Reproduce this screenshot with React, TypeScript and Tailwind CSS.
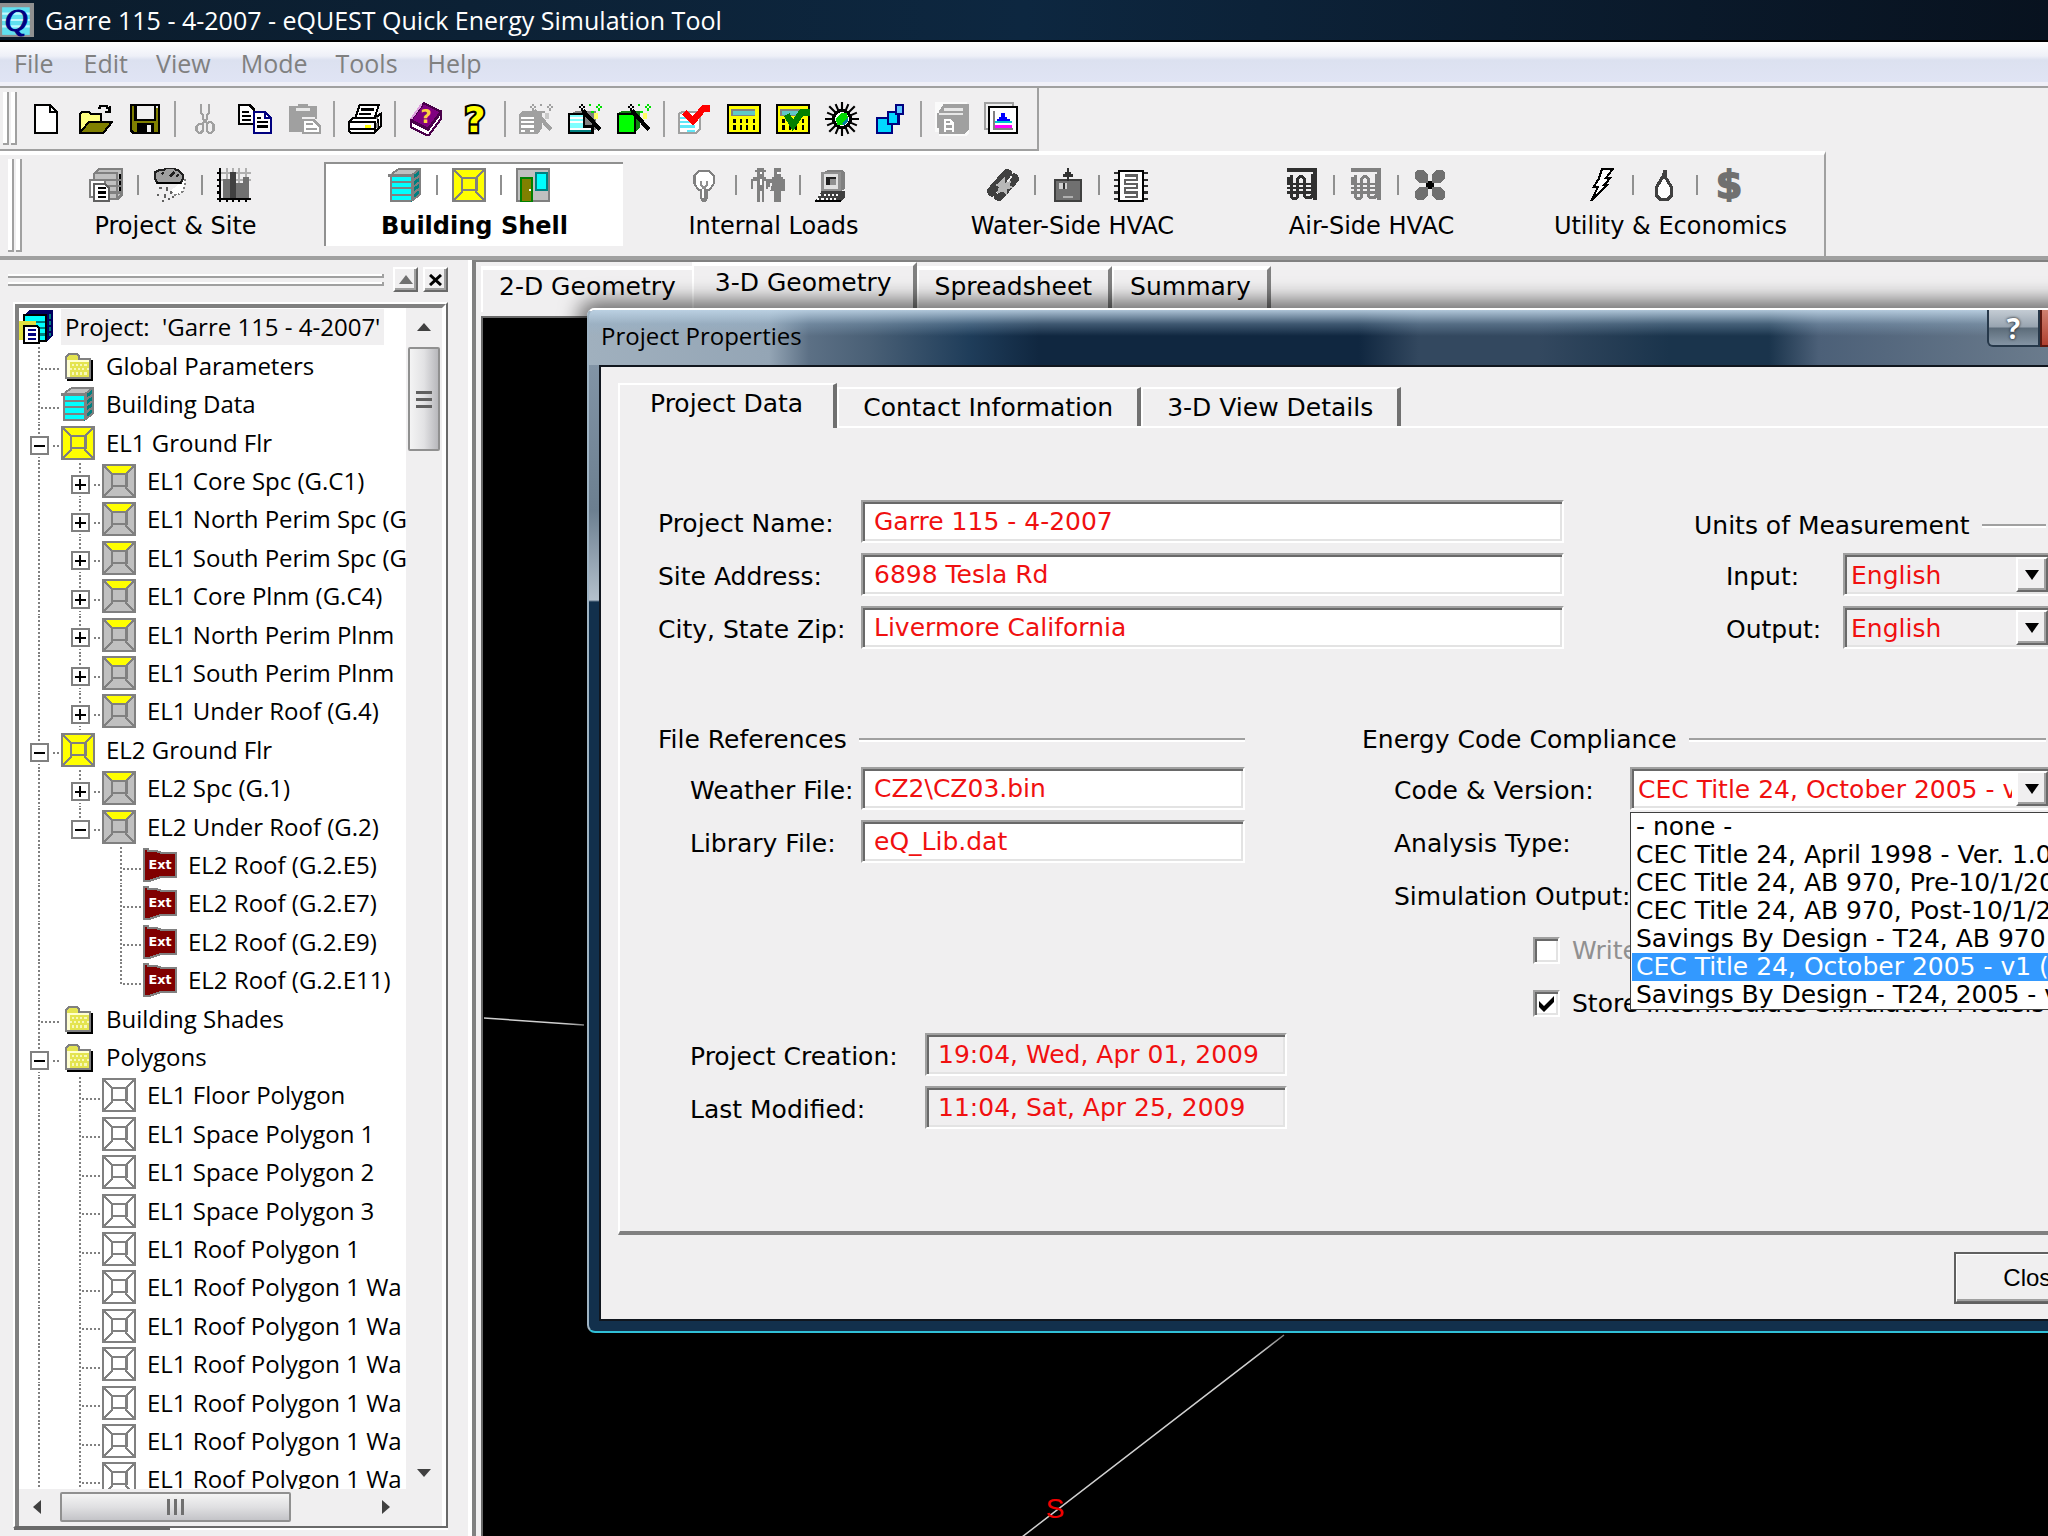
import React, { ReactNode, useState } from "react";

const svgProps = {
  viewBox: "0 0 16 16",
  width: 34,
  height: 34,
  shapeRendering: "crispEdges" as const,
  fill: "none",
  "aria-hidden": true,
};

const Icon = ({ children }: { children: ReactNode }) => (
  <svg {...svgProps} className="shrink-0">
    {children}
  </svg>
);

/* ---------- toolbar icons ---------- */

const NewIcon = () => (
  <Icon>
    <path d="M2.5 1.5h7l3 3v10h-10z" fill="#fff" stroke="#000" />
    <path d="M9.5 1.5v3h3" stroke="#000" />
  </Icon>
);

const OpenIcon = () => (
  <Icon>
    <path d="M.5 14V5.500l1-1h3l1 1h5v4" fill="#ffff80" stroke="#000" />
    <path d="M.5 14.500l4-5h11l-4 5z" fill="#808000" stroke="#000" />
    <path d="M9 3h1V2h3v1h1v2M12 4.500h3M14.500 2v3" stroke="#000" />
  </Icon>
);

const SaveIcon = () => (
  <Icon>
    <path d="M1.500 1.500h13v13h-12l-1-1z" fill="#808000" stroke="#000" />
    <path d="M4 2h8v6H4z" fill="#f0f0f0" />
    <path d="M3.500 1.500v7h9v-7" stroke="#000" />
    <path d="M4 10h8v5H4z" fill="#000" />
    <path d="M9 11h2v3H9zM13 2h1v1h-1z" fill="#f0f0f0" />
  </Icon>
);

const CutIcon = () => (
  <Icon>
    <path d="M5.500 1v4l1 1v2l2 2M9.500 1v4l-1 1v2l-2 2" stroke="#a0a0a0" />
    <path d="M4.500 10.500h2v3l-1 1h-1l-1-1v-2zM9.500 9.500h1l1 1v3l-1 1h-1l-1-1v-3z" stroke="#a0a0a0" />
  </Icon>
);

const CopyIcon = () => (
  <Icon>
    <path d="M.5 1.500h5l2 2v7h-7z" fill="#fff" stroke="#000" />
    <path d="M2 4.500h3M2 6.500h4M2 8.500h4" stroke="#000" />
    <path d="M7.500 4.500h5l3 3v7h-8z" fill="#fff" stroke="#000080" />
    <path d="M12.500 4.500v3h3" stroke="#000080" />
    <path d="M9 7.500h2M9 9.500h5M9 11.500h5" stroke="#000" />
  </Icon>
);

const PasteIcon = () => (
  <Icon>
    <path d="M1 2h4V1h5v1h4v6h-1V7H7v7H1z" fill="#a0a0a0" />
    <path d="M4 3h7v1H4z" fill="#e8e8e8" />
    <path d="M7.500 8.500h5l3 3v3h-8z" fill="#fff" stroke="#a0a0a0" />
    <path d="M9 10.500h3M9 12.500h5" stroke="#a0a0a0" />
  </Icon>
);

const PrintIcon = () => (
  <Icon>
    <path d="M5.500 1.500h9l-2 6h-9z" fill="#fff" stroke="#000" />
    <path d="M6 3.500h6M5 5.500h6" stroke="#000" />
    <path d="M.5 9.500l2-2h10l3-2v6l-3 3h-11l-1-1z" fill="#fff" stroke="#000" />
    <path d="M1 9.500h11.500v5M1 12.500h11M14 8v4" stroke="#000" />
    <path d="M8 11h3v1H8z" fill="#ff0" />
    <path d="M13 7h1v1h-1zM13 10h1v2h-1z" fill="#808080" />
  </Icon>
);

const BookIcon = () => (
  <Icon>
    <path d="M1 9l8 4 6-8v3l-6 8-8-4z" fill="#fff" stroke="#4a004a" />
    <path d="M7 .5l8 4-6 8-8-4z" fill="#800080" stroke="#4a004a" />
    <path d="M1 8l5-7" stroke="#e0a0e0" />
    <text x="8" y="10" textAnchor="middle" fontSize="9" fontWeight="700" fontFamily="DejaVu Sans" fill="#ffd040">
      ?
    </text>
  </Icon>
);

const HelpIcon = () => (
  <Icon>
    <text
      x="8"
      y="14"
      textAnchor="middle"
      fontSize="17"
      fontWeight="700"
      fontFamily="DejaVu Sans"
      fill="#ff0"
      stroke="#000"
      strokeWidth="2"
      paintOrder="stroke"
    >
      ?
    </text>
  </Icon>
);

const Wand = ({ color, spark, star }: { color: string; spark: string; star: string }) => (
  <>
    <path d="M7 4l8 9" stroke={color} strokeWidth="2" />
    <path d="M6 1h1v1H6zM5 2h1v1H5zM7 2h1v1H7zM6 3h1v1H6z" fill={color} />
    <path d="M10 1h1v1h-1zM14 1h1v1h-1zM13 2h1v1h-1zM15 2h1v1h-1zM14 3h1v1h-1zM11 4h1v1h-1z" fill={spark} />
    <path d="M12 5h2v3h-2z" fill={star} />
  </>
);

const GrayWizardIcon = () => (
  <Icon>
    <path d="M0 6l2-2h9v8l-2 3H0z" fill="#a0a0a0" />
    <path d="M1 7.500h6M1 9.500h6M1 11.500h6M1 13.500h2M5 13.500h2" stroke="#fff" />
    <Wand color="#a0a0a0" spark="#a0a0a0" star="#c8c8c8" />
  </Icon>
);

const CyanWizardIcon = () => (
  <Icon>
    <path d="M2 5l2-1h9v9l-3 2z" fill="#808080" />
    <path d="M.5 5.500h7v6h4v3H.5z" fill="#80ffff" stroke="#000" />
    <path d="M1 7.500h6M1 9.500h6M1 12.500h10" stroke="#fff" />
    <path d="M1 13.500h10" stroke="#008080" />
    <Wand color="#000" spark="#00e000" star="#ffff60" />
  </Icon>
);

const GreenWizardIcon = () => (
  <Icon>
    <path d="M1 5l2-1h8v8l-2 2z" fill="#108010" />
    <path d="M.5 5.500h8v9h-8z" fill="#00ff00" stroke="#000" />
    <Wand color="#000" spark="#00e000" star="#ffff60" />
  </Icon>
);

const RedCheckIcon = () => (
  <Icon>
    <path d="M.5 5.500l2-1h8v8l-2 2h-8z" fill="#fff" stroke="#a0a0a0" />
    <path d="M1 7.500h7M1 9.500h7M1 11.500h7M4 13.500h4" stroke="#60e8f8" />
    <path d="M3 5l4 4 5-6h3" stroke="#f00" strokeWidth="3" />
  </Icon>
);

const Calculator = () => (
  <>
    <path d="M.5 1.500h15v13H.5z" fill="#ff0" stroke="#000" />
    <path d="M2 3.500h11v3H2z" fill="#808080" />
    <path d="M3 4h10v2H3z" fill="#60c8c8" />
    <path d="M3.500 8v2M6.500 8v2M9.500 8v2M12.500 8v2M3.500 11v2M6.500 11v2M9.500 11v2M12.500 11v2" stroke="#000" />
  </>
);

const CalcIcon = () => (
  <Icon>
    <Calculator />
  </Icon>
);

const CalcCheckIcon = () => (
  <Icon>
    <Calculator />
    <path d="M5 6l3 5 4-6h4" stroke="#008000" strokeWidth="3" />
  </Icon>
);

const SunIcon = () => (
  <Icon>
    <path
      d="M8 0v16M0 8h16M2 2l12 12M14 2L2 14M5 1l6 14M11 1L5 15M1 5l14 6M1 11l14-6"
      stroke="#000"
      shapeRendering="auto"
    />
    <circle cx="8" cy="8" r="4" fill="#fff" stroke="#000" strokeWidth="1.500" />
    <path d="M5 8l3-3h2l1 3-3 3H6z" fill="#00d800" />
    <path d="M8 10l3-3v2l-2 2z" fill="#0080a0" />
  </Icon>
);

const BoxesIcon = () => (
  <Icon>
    <path d="M1.500 7.500h7v7h-7z" fill="#00d8ff" stroke="#000080" />
    <path d="M6.500 4.500h5v6h-5z" fill="#00d8ff" stroke="#000080" />
    <path d="M10.500 1.500h3v4h-3z" fill="#60c8ff" stroke="#000080" />
  </Icon>
);

const ReportsIcon = () => (
  <Icon>
    <path d="M0 0h15v2h1v13l-1 1H2v-2H0z" fill="#fafafa" />
    <path d="M2 4l2-3h12v12l-2 2H2z" fill="#a0a0a0" />
    <path d="M4 3.500h9M2 5.500h11" stroke="#e8e8e8" />
    <path d="M1 5h1v7H1z" fill="#a0a0a0" />
    <path d="M3.500 7.500h4l2 2v5h-6z" fill="#fff" stroke="#a0a0a0" />
    <path d="M5 9.500h2M5 11.500h3M5 13.500h3" stroke="#a0a0a0" />
  </Icon>
);

const ChartWindowIcon = () => (
  <Icon>
    <path d="M.5.500h13v12H.5z" fill="#f0f0f0" stroke="#a0a0a0" />
    <path d="M2.500 2.500h13v12h-13z" fill="#fff" stroke="#000" />
    <path d="M4.500 4v8.500h9" stroke="#808080" />
    <path d="M6 10V8h1V7h1V5h2v2h1v1h1v2z" fill="#00f" />
    <path d="M5 9h8v1H5z" fill="#0cc" />
    <path d="M5 11h8v1H5z" fill="#f0f" />
  </Icon>
);

/* ---------- module icons ---------- */

const ProjectSheetsIcon = () => (
  <Icon>
    <path d="M2.500 2.500l2-2h11v12l-2 2h-11z" fill="#c0c0c0" stroke="#808080" />
    <path d="M3 2.500h10v12M3 5.500h12M3 8.500h12M3 11.500h12" stroke="#808080" />
    <path d="M14.500 3v2M14.500 6v2M14.500 9v2" stroke="#000" />
    <path d="M.5 5.500h7v8h-7z" fill="#fff" stroke="#808080" />
    <path d="M2.500 7.500h5l2 2v6h-7z" fill="#fff" stroke="#606060" />
    <path d="M4 9.500h4M4 11.500h4M4 13.500h4" stroke="#000" />
  </Icon>
);

const WeatherIcon = () => (
  <Icon>
    <path d="M15 5v3l-1 3-3 2-3-2" fill="#fff" stroke="#808080" strokeDasharray="1 1" />
    <path d="M1 5V2l2-1h2l1-1h4l1 1h1l2 2v2l-1 2H2z" fill="#a0a0a0" stroke="#202020" />
    <path d="M1 6.500h12v1H2z" fill="#000" />
    <path d="M4 3l1-1M8 4l2-2M11 4l1-1" stroke="#202020" />
    <path d="M3.500 9v1M6.500 9v2M2.500 12v1M5.500 12v2M8.500 11v1M4.500 15v1M7.500 14v1M9.500 13v1" stroke="#606060" />
  </Icon>
);

const BarsIcon = () => (
  <Icon>
    <path d="M1 2.500h15M1 5.500h15M4.500 0v14M7.500 0v14M10.500 0v14M13.500 0v14" stroke="#b0b0b0" />
    <path d="M3 5h3v9H3zM9 7h3v7H9zM12 4h3v10h-3z" fill="#707070" />
    <path d="M6 2h3v12H6z" fill="#404040" />
    <path d="M1.500 0v16M0 14.500h16M0 2.500h2M0 5.500h2M0 8.500h2M0 11.500h2M4.500 15v1M7.500 15v1M10.500 15v1M13.500 15v1" stroke="#000" />
  </Icon>
);

const FloorsIcon = () => (
  <Icon>
    <path d="M1 3l4-3h10l-3 3z" fill="#c0c0c0" />
    <path d="M11 3l4-3v12l-4 4z" fill="#008080" />
    <path d="M1 3h10v13H1z" fill="#0ff" />
    <path d="M1.500 3v12.500M0 3.500h11.500v12M1 15.500h10M1 6.500h10l4-3M1 9.500h10l4-3M1 12.500h10l4-3M11 3.500l4-3v12l-4 3M2 2.500l3-2h10" stroke="#808080" />
  </Icon>
);

const ZoneIcon = ({ fill, top }: { fill: string; top: string }) => (
  <Icon>
    <path d="M.5.500h15v15H.5z" fill={fill} stroke="#808080" />
    <path d="M2 1h12l-3 4H5z" fill={top} />
    <path d="M5 5l-4-4M11 5l4-4M5 11l-4 4M11 11l4 4" stroke="#808080" strokeWidth=".7" />
    <path d="M4.500 4.500h7v6h-7z" fill={fill} stroke="#808080" />
  </Icon>
);

const DoorIcon = () => (
  <Icon>
    <path d="M.5.500h15v15H.5z" fill="#c0c0c0" stroke="#808080" />
    <path d="M2.500 4.500h5V16h-5z" fill="#808000" stroke="#008000" />
    <path d="M6 10h1v1H6z" fill="#fff" />
    <path d="M9.500 2.500h5v8h-5z" fill="#0ff" stroke="#008080" />
  </Icon>
);

const BulbIcon = () => (
  <Icon>
    <path d="M5.500 1.500h5l2 2v4l-2 3h-5l-2-3v-4z" fill="#fff" stroke="#808080" />
    <path d="M6.500 6v2l1 1v2M9.500 6v2l-1 1v2" stroke="#909090" />
    <path d="M6 10h4v4l-1 2H7l-1-2z" fill="#808080" />
    <path d="M7 10h1v4H7z" fill="#fff" />
  </Icon>
);

const PeopleIcon = () => (
  <Icon>
    <path d="M3 0h3v1h1v1H6v2h1v1h1v5H7V6H6v10H5v-5H4v5H3V6H2H1v4H0V5h1V4h2V2H2V1h1zM11 0h3v2h-1v1h1v1h1v1h1v5h-1V7l1 4h-2v5h-1v-5v5h-2v-5H9l1-4H9v2H8V5h2V4h1z" fill="#808080" />
    <path d="M4 2h1v1H4zM12 2h1v1h-1zM4 5h1v3H4z" fill="#fff" />
  </Icon>
);

const ComputerIcon = () => (
  <Icon>
    <path d="M4 2l2-1h7l1 1v8l-2 1H4z" fill="#808080" />
    <path d="M3.500 2.500h8v8h-8z" fill="#e0e0e0" stroke="#909090" />
    <path d="M5 4h5v4H5z" fill="#202020" />
    <path d="M7 5h3v3H7z" fill="#909090" />
    <path d="M3 11h11v3l-2 2H0z" fill="#404040" />
    <path d="M2 12.500h10M1 14.500h10" stroke="#fff" strokeDasharray="1 1" />
    <path d="M0 15h12v1H0z" fill="#000" />
  </Icon>
);

const PipesIcon = () => (
  <Icon>
    <path d="M3 11L10 3M6 13l7-8" stroke="#404040" strokeWidth="5" strokeLinecap="round" />
    <path d="M5 12l3-4M9 8l3-4" stroke="#f0eff0" strokeWidth=".8" />
    <path d="M9 4v3l3-1-1 2 2 1-3 1v3l-2-2-3 1 1-3-2-1 2-1z" fill="#b8b8b8" />
  </Icon>
);

const BoilerIcon = () => (
  <Icon>
    <path d="M2.500 5.500h12v10h-12z" fill="#707070" stroke="#404040" />
    <path d="M8 0h1v2h1v1h1v1H9v2H8V4H6V3h1V2h1z" fill="#303030" />
    <path d="M4 7h4v3H4z" fill="#d0d0d0" />
    <path d="M6 7h1v3H6z" fill="#303030" />
    <path d="M6 13h5v1H6z" fill="#b0b0b0" />
  </Icon>
);

const ChillerIcon = () => (
  <Icon>
    <path d="M2.500 1.500h11v14h-11z" fill="#fff" stroke="#000" />
    <path d="M5 3.500h6v2H5v2h6v2H5v2h6v2H5" stroke="#606060" />
    <path d="M0 2.500h2M0 5.500h2M0 8.500h2M0 11.500h2M0 14.500h2M14 2.500h2M14 5.500h2M14 8.500h2M14 11.500h2M14 14.500h2" stroke="#303030" />
  </Icon>
);

const CoilIcon = ({ color }: { color: string }) => (
  <Icon>
    <path d="M1 1h13v14" stroke={color} strokeWidth="2" />
    <path d="M1.500 4v3M3 3.500v10l1 1h1l1-1V5l1-1h1l1 1v8l1 1h2l1-1V3" stroke={color} strokeWidth="1.500" />
    <path d="M1 7.500h14M1 9.500h14M1 11.500h14" stroke={color} />
  </Icon>
);

const FanIcon = () => (
  <Icon>
    <path d="M2 1h3l2 2v3h2V3l2-2h3l1 1v3l-2 2h-3v2h3l2 2v3l-1 1h-3l-2-2v-3H7v3l-2 2H2l-1-1v-3l2-2h3V7H3L1 5V2z" fill="#707070" />
    <path d="M7 6h2v1h1v2H9v1H7V9H6V7h1z" fill="#000" />
  </Icon>
);

const BoltIcon = () => (
  <Icon>
    <path d="M8.500.500h5l-3 4h2L9.500 8h1.500L3.500 15.500 6.500 9H4.500l2.500-4z" fill="#fff" stroke="#000" />
  </Icon>
);

const FlameIcon = () => (
  <Icon>
    <path d="M8 1v3l3 5v4l-2 2H6l-2-2V9l3-5z" fill="#fff" stroke="#404040" strokeWidth="1.500" />
  </Icon>
);

const DollarIcon = () => (
  <Icon>
    <text
      x="8"
      y="14"
      textAnchor="middle"
      fontSize="18"
      fontWeight="700"
      fontFamily="DejaVu Sans"
      fill="#707070"
      stroke="#707070"
      strokeWidth=".8"
    >
      $
    </text>
  </Icon>
);

/* ---------- tree icons ---------- */

const ProjectIcon = () => (
  <Icon>
    <path d="M3 2l2-2h11v12l-3 3H3z" fill="#000060" />
    <path d="M2.500 2.500h10v12h-10z" fill="#0ff" stroke="#000" />
    <path d="M3 5.500h9M3 8.500h9M3 11.500h9" stroke="#008080" />
    <path d="M14.500 2v10" stroke="#008080" strokeDasharray="2 1" />
    <path d="M0 5h8v9H0z" fill="#e0e040" />
    <path d="M2.500 7.500h6l1 1v7h-7z" fill="#fff" stroke="#000" />
    <path d="M4 9.500h4M4 11.500h4M4 13.500h4" stroke="#000080" />
  </Icon>
);

const FolderIcon = () => (
  <Icon>
    <path d="M3 5h12v10H3z" fill="#000" />
    <path d="M2.500 13.500v-10l1-1h4l1 1v1h5v9z" fill="#e4e450" stroke="#808080" />
    <path d="M3 5.500h10M3.500 5v8" stroke="#ffffd0" />
    <path d="M5 7.500h8M4 9.500h9M5 11.500h8" stroke="#f8f8b8" strokeDasharray="1 1" />
  </Icon>
);

const ExtIcon = () => (
  <Icon>
    <path d="M.5.500h2v1h4l3 1h6v11H9l-3 1-3 1H.5z" fill="#800000" stroke="#808080" />
    <text x="8" y="10" textAnchor="middle" fontSize="6" fontWeight="700" fontFamily="DejaVu Sans" fill="#fff">
      Ext
    </text>
  </Icon>
);

const YellowZone = () => <ZoneIcon fill="#ffff00" top="#ffff00" />;
const GrayZone = () => <ZoneIcon fill="#c0c0c0" top="#ffff00" />;
const WhiteZone = () => <ZoneIcon fill="#ffffff" top="#ffffff" />;

/* ---------- data ---------- */

const MENUS = ["File", "Edit", "View", "Mode", "Tools", "Help"];

const TOOLS: { label: string; icon: () => React.JSX.Element }[][] = [
  [
    { label: "New", icon: NewIcon },
    { label: "Open", icon: OpenIcon },
    { label: "Save", icon: SaveIcon },
  ],
  [
    { label: "Cut", icon: CutIcon },
    { label: "Copy", icon: CopyIcon },
    { label: "Paste", icon: PasteIcon },
  ],
  [{ label: "Print", icon: PrintIcon }],
  [
    { label: "Help Topics", icon: BookIcon },
    { label: "Help", icon: HelpIcon },
  ],
  [
    { label: "Wizard", icon: GrayWizardIcon },
    { label: "Building Wizard", icon: CyanWizardIcon },
    { label: "Efficiency Wizard", icon: GreenWizardIcon },
  ],
  [
    { label: "Check", icon: RedCheckIcon },
    { label: "Calculate", icon: CalcIcon },
    { label: "Compliance", icon: CalcCheckIcon },
    { label: "Daylighting", icon: SunIcon },
    { label: "Components", icon: BoxesIcon },
  ],
  [
    { label: "Reports", icon: ReportsIcon },
    { label: "Results", icon: ChartWindowIcon },
  ],
];

const MODULES = [
  { label: "Project & Site", icons: [<ProjectSheetsIcon />, <WeatherIcon />, <BarsIcon />] },
  { label: "Building Shell", icons: [<FloorsIcon />, <YellowZone />, <DoorIcon />] },
  { label: "Internal Loads", icons: [<BulbIcon />, <PeopleIcon />, <ComputerIcon />] },
  { label: "Water-Side HVAC", icons: [<PipesIcon />, <BoilerIcon />, <ChillerIcon />] },
  { label: "Air-Side HVAC", icons: [<CoilIcon color="#303030" />, <CoilIcon color="#808080" />, <FanIcon />] },
  { label: "Utility & Economics", icons: [<BoltIcon />, <FlameIcon />, <DollarIcon />] },
];

// One letter of rails per tree column:
// "|" line, " " blank, "t" branch, "l" last branch, "+" closed box, "-" open box, "_" open box on the last branch
const TREE: { rails: string; label: string; icon: () => React.JSX.Element }[] = [
  { rails: "t", label: "Global Parameters", icon: FolderIcon },
  { rails: "t", label: "Building Data", icon: FloorsIcon },
  { rails: "-", label: "EL1 Ground Flr", icon: YellowZone },
  { rails: "|+", label: "EL1 Core Spc (G.C1)", icon: GrayZone },
  { rails: "|+", label: "EL1 North Perim Spc (G", icon: GrayZone },
  { rails: "|+", label: "EL1 South Perim Spc (G", icon: GrayZone },
  { rails: "|+", label: "EL1 Core Plnm (G.C4)", icon: GrayZone },
  { rails: "|+", label: "EL1 North Perim Plnm", icon: GrayZone },
  { rails: "|+", label: "EL1 South Perim Plnm", icon: GrayZone },
  { rails: "|+", label: "EL1 Under Roof (G.4)", icon: GrayZone },
  { rails: "-", label: "EL2 Ground Flr", icon: YellowZone },
  { rails: "|+", label: "EL2 Spc (G.1)", icon: GrayZone },
  { rails: "|_", label: "EL2 Under Roof (G.2)", icon: GrayZone },
  { rails: "| t", label: "EL2 Roof (G.2.E5)", icon: ExtIcon },
  { rails: "| t", label: "EL2 Roof (G.2.E7)", icon: ExtIcon },
  { rails: "| t", label: "EL2 Roof (G.2.E9)", icon: ExtIcon },
  { rails: "| l", label: "EL2 Roof (G.2.E11)", icon: ExtIcon },
  { rails: "t", label: "Building Shades", icon: FolderIcon },
  { rails: "-", label: "Polygons", icon: FolderIcon },
  { rails: "|t", label: "EL1 Floor Polygon", icon: WhiteZone },
  { rails: "|t", label: "EL1 Space Polygon 1", icon: WhiteZone },
  { rails: "|t", label: "EL1 Space Polygon 2", icon: WhiteZone },
  { rails: "|t", label: "EL1 Space Polygon 3", icon: WhiteZone },
  { rails: "|t", label: "EL1 Roof Polygon 1", icon: WhiteZone },
  { rails: "|t", label: "EL1 Roof Polygon 1 Wa", icon: WhiteZone },
  { rails: "|t", label: "EL1 Roof Polygon 1 Wa", icon: WhiteZone },
  { rails: "|t", label: "EL1 Roof Polygon 1 Wa", icon: WhiteZone },
  { rails: "|t", label: "EL1 Roof Polygon 1 Wa", icon: WhiteZone },
  { rails: "|t", label: "EL1 Roof Polygon 1 Wa", icon: WhiteZone },
  { rails: "|t", label: "EL1 Roof Polygon 1 Wa", icon: WhiteZone },
];

const CODES = [
  "- none -",
  "CEC Title 24, April 1998 - Ver. 1.0",
  "CEC Title 24, AB 970, Pre-10/1/2001",
  "CEC Title 24, AB 970, Post-10/1/2001",
  "Savings By Design - T24, AB 970",
  "CEC Title 24, October 2005 - v1 (T24)",
  "Savings By Design - T24, 2005 - v1",
];

/* ---------- shared pieces ---------- */

const sunken =
  "border-2 border-t-[#a0a0a0] border-l-[#a0a0a0] border-r-white border-b-white shadow-[inset_2px_2px_#696969,inset_-2px_-2px_#e3e3e3]";
const raised =
  "border-2 border-t-white border-l-white border-r-[#696969] border-b-[#696969] shadow-[inset_-2px_-2px_#a0a0a0] bg-[#f0eff0]";

const Separator = () => <span className="mx-[5px] h-9 w-[2px] bg-[#a0a0a0]" />;

const Grip = () => (
  <span className="flex gap-[2px] self-stretch py-1">
    <span className="w-[6px] border-r-2 border-b-2 border-[#a0a0a0] bg-white" />
    <span className="w-[6px] border-r-2 border-b-2 border-[#a0a0a0] bg-white" />
  </span>
);

const Rail = ({ kind }: { kind: string }) => {
  const boxed = "+-_".includes(kind);
  const art = (
    <svg width="41" height="100%" shapeRendering="crispEdges" aria-hidden className="block">
      {kind !== " " && (
        <line
          x1="20"
          y1="1"
          x2="20"
          y2={kind === "l" || kind === "_" ? 24 : 40}
          stroke="#808080"
          strokeWidth="2"
          strokeDasharray="2 2"
        />
      )}
      {kind !== " " && kind !== "|" && (
        <line x1="22" y1="23" x2="41" y2="23" stroke="#808080" strokeWidth="2" strokeDasharray="2 2" />
      )}
      {boxed && (
        <>
          <rect x="9" y="11" width="23" height="23" fill="#fff" />
          <rect x="12" y="14" width="17" height="17" fill="#fff" stroke="#808080" strokeWidth="2" />
          <rect x="15" y="22" width="11" height="2" fill="#000" />
          {kind === "+" && <rect x="19" y="17" width="2" height="11" fill="#000" />}
        </>
      )}
    </svg>
  );

  if (boxed) {
    return (
      <button className="w-[41px] shrink-0 self-stretch" aria-label={kind === "+" ? "Expand" : "Collapse"}>
        {art}
      </button>
    );
  }
  return <span className="w-[41px] shrink-0 self-stretch">{art}</span>;
};

interface FieldProps {
  id: string;
  label: string;
  labelWidth: string;
  value: string;
  readOnly?: boolean;
}

const TextField = ({ id, label, labelWidth, value, readOnly }: FieldProps) => (
  <div className="flex h-[43px] items-center">
    <label htmlFor={id} className={`shrink-0 pt-1 ${labelWidth}`}>
      {label}
    </label>
    <input
      id={id}
      type="text"
      defaultValue={value}
      readOnly={readOnly}
      className={`h-full min-w-0 flex-1 px-[11px] text-[#f01010] outline-none ${sunken} ${
        readOnly ? "bg-[#f0eff0]" : "bg-white"
      }`}
    />
  </div>
);

interface SelectProps {
  id: string;
  label: string;
  labelWidth: string;
  options: string[];
  value: string;
  white?: boolean;
  children?: ReactNode;
}

const SelectField = ({ id, label, labelWidth, options, value, white, children }: SelectProps) => (
  <div className="flex h-[43px] items-center">
    <label htmlFor={id} className={`shrink-0 pt-1 ${labelWidth}`}>
      {label}
    </label>
    <div className="relative h-full min-w-0 flex-1">
      <select
        id={id}
        defaultValue={value}
        className={`h-full w-full appearance-none pt-[2px] pr-[38px] pl-[6px] leading-9 text-[#f01010] outline-none ${sunken} ${
          white ? "bg-white" : "bg-[#f0eff0]"
        }`}
      >
        {options.map(o => (
          <option key={o}>{o}</option>
        ))}
      </select>
      <span className={`pointer-events-none absolute top-1 right-1 bottom-1 flex w-8 items-center justify-center ${raised}`}>
        <svg width="16" height="10" viewBox="0 0 16 10" aria-hidden>
          <path d="M1 0h14L8 10z" fill="#000" />
        </svg>
      </span>
      {children}
    </div>
  </div>
);

const GroupHeading = ({ children }: { children: ReactNode }) => (
  <legend className="flex h-[43px] w-full items-center gap-3">
    <span className="shrink-0">{children}</span>
    <span className="h-1 flex-1 border-t-2 border-[#a0a0a0] bg-white" />
  </legend>
);

/* ---------- window parts ---------- */

const TitleBar = () => (
  <header className="flex h-10 shrink-0 items-center gap-[11px] bg-linear-to-r from-[#0b1c2c] via-[#0d2740] to-[#08121f] text-[25px] text-white">
    <svg width="34" height="36" viewBox="0 0 16 16" aria-hidden>
      <path d="M0 0h16v16H0z" fill="#909090" />
      <path d="M1 2h13v13H1z" fill="#60e0f0" />
      <path d="M1 5h13M1 8h13M1 11h13" stroke="#c0f8ff" />
      <text x="7.500" y="13" textAnchor="middle" fontSize="15" fontStyle="italic" fontFamily="Liberation Serif" fill="#000080" stroke="#000080" strokeWidth=".5">
        Q
      </text>
    </svg>
    <h1>Garre 115 - 4-2007 - eQUEST Quick Energy Simulation Tool</h1>
  </header>
);

const MenuBar = () => (
  <nav className="flex h-[46px] shrink-0 items-center border-t-2 border-b-4 border-t-black border-b-[#f0f0f8] bg-[linear-gradient(to_bottom,#ffffff_0%,#eef0f8_35%,#dce1f0_45%,#e0e4f4_100%)] text-[25px] text-[#808080]">
    {MENUS.map(m => (
      <button key={m} className="px-[14px] pt-[2px] odd:pr-4">
        {m}
      </button>
    ))}
  </nav>
);

const ToolBar = () => (
  <div className="flex h-[65px] shrink-0 border-t-2 border-[#a0a0a0]">
    <div className="flex items-center border-r-2 border-b-2 border-[#a0a0a0] pr-3 pl-[3px]">
      <Grip />
      <div className="flex items-center pl-[5px]">
        {TOOLS.map((group, i) => (
          <React.Fragment key={i}>
            {i > 0 && <Separator />}
            {group.map(({ label, icon: ToolIcon }) => (
              <button key={label} aria-label={label} className="flex w-[49px] justify-center">
                <ToolIcon />
              </button>
            ))}
          </React.Fragment>
        ))}
      </div>
    </div>
  </div>
);

const ModuleBar = () => {
  const [current, setCurrent] = useState(1);

  return (
    <div className="flex h-[109px] shrink-0 border-b-4 border-[#a0a0a0] font-['DejaVu_Sans',sans-serif]">
      <div className="flex border-t-4 border-r-2 border-t-white border-r-[#a0a0a0] pr-[5px] pl-2">
        <Grip />
        <div className="flex items-start pt-[7px] pl-[3px]">
          {MODULES.map((m, i) => (
            <button
              key={m.label}
              onClick={() => setCurrent(i)}
              className={`flex h-[84px] w-[299px] flex-col items-center border-t-2 border-l-2 pt-1 ${
                current === i ? "border-[#909090] bg-white font-bold" : "border-transparent"
              }`}
            >
              <span className="flex items-center pr-3">
                {m.icons.map((icon, n) => (
                  <React.Fragment key={n}>
                    {n > 0 && <span className="mx-[14px] h-5 w-[2px] bg-[#909090]" />}
                    {icon}
                  </React.Fragment>
                ))}
              </span>
              <span className="pt-[6px] leading-9 whitespace-nowrap">{m.label}</span>
            </button>
          ))}
        </div>
      </div>
    </div>
  );
};

const Sidebar = () => (
  <aside className="flex w-[472px] shrink-0 flex-col border-r-4 border-white pr-5">
    <div className="flex items-center gap-[5px] pt-[7px] pl-2">
      <span className="flex flex-1 flex-col gap-1 pr-1">
        <span className="h-1 border-r-2 border-b-2 border-[#a0a0a0] bg-white" />
        <span className="h-1 border-r-2 border-b-2 border-[#a0a0a0] bg-white" />
      </span>
      <button aria-label="Dock" className={`flex size-[25px] items-center justify-center ${raised}`}>
        <svg width="14" height="9" viewBox="0 0 14 9" aria-hidden>
          <path d="M7 0l7 9H0z" fill="#707070" />
        </svg>
      </button>
      <button aria-label="Close panel" className={`flex size-[25px] items-center justify-center ${raised}`}>
        <svg width="13" height="12" viewBox="0 0 13 12" aria-hidden>
          <path d="M1 1l11 10M12 1L1 11" stroke="#000" strokeWidth="3" />
        </svg>
      </button>
    </div>

    <div className="mt-[10px] ml-[13px] flex min-h-0 flex-1 flex-col border-2 border-t-white border-l-white border-r-[#696969] border-b-[#696969]">
      <div className="flex min-h-0 flex-1 flex-col border-t-4 border-r-4 border-l-4 border-t-[#808080] border-r-white border-l-[#808080]">
        <div className="flex min-h-0 flex-1 bg-white">
          <ul className="grid min-w-0 flex-1 auto-rows-[38px_39px_38px_39px_38px] overflow-hidden whitespace-nowrap">
            <li className="flex items-center">
              <ProjectIcon />
              <span className="ml-2 bg-[#f0eff0] px-1 leading-9 whitespace-pre">Project:  'Garre 115 - 4-2007'</span>
            </li>
            {TREE.map(({ rails, label, icon: NodeIcon }, i) => (
              <li key={i} className="flex min-w-0 items-center overflow-hidden">
                {rails.split("").map((kind, n) => (
                  <Rail key={n} kind={kind} />
                ))}
                <span className="pl-[1px]">
                  <NodeIcon />
                </span>
                <span className="pl-[11px]">{label}</span>
              </li>
            ))}
          </ul>
          <div className="flex w-9 flex-col items-center bg-[#f0eff0] pt-[15px] pb-3">
            <svg width="14" height="8" viewBox="0 0 14 8" aria-hidden>
              <path d="M7 0l7 8H0z" fill="#404040" />
            </svg>
            <span className="mt-4 flex h-[104px] w-8 flex-col items-center justify-center gap-1 rounded-xs border-2 border-[#909090] bg-linear-to-r from-[#f4f4f4] via-[#e2e2e4] to-[#b8b8bc]">
              <span className="h-[3px] w-4 bg-[#606060]" />
              <span className="h-[3px] w-4 bg-[#606060]" />
              <span className="h-[3px] w-4 bg-[#606060]" />
            </span>
            <svg width="14" height="8" viewBox="0 0 14 8" aria-hidden className="mt-auto">
              <path d="M0 0h14L7 8z" fill="#404040" />
            </svg>
          </div>
        </div>
        <div className="flex h-[37px] shrink-0 items-center bg-[#f0eff0] pr-[52px] pb-[2px] pl-[14px]">
          <svg width="8" height="14" viewBox="0 0 8 14" aria-hidden>
            <path d="M8 0v14L0 7z" fill="#404040" />
          </svg>
          <span className="ml-[19px] flex h-[30px] w-[231px] items-center justify-center gap-1 rounded-xs border-2 border-[#909090] bg-linear-to-b from-[#f4f4f4] via-[#e0e0e2] to-[#c4c4c8]">
            <span className="h-4 w-[3px] bg-[#707070]" />
            <span className="h-4 w-[3px] bg-[#707070]" />
            <span className="h-4 w-[3px] bg-[#707070]" />
          </span>
          <svg width="8" height="14" viewBox="0 0 8 14" aria-hidden className="ml-auto">
            <path d="M0 0v14l8-7z" fill="#404040" />
          </svg>
        </div>
      </div>
    </div>
    <div className="flex h-2 shrink-0 items-start pl-[14px]">
      <span className="h-[2px] w-[156px] bg-[#696969]" />
      <span className="h-[2px] flex-1 bg-white" />
    </div>
  </aside>
);

const ViewTab = ({ label, active }: { label: string; active?: boolean }) => (
  <button
    role="tab"
    aria-selected={!!active}
    className={`border-t-4 border-r-4 border-l-2 border-t-white border-r-[#808080] border-l-white bg-[#f0eff0] ${
      active ? "h-[50px] px-[21px] pb-[14px]" : "h-[46px] px-4 pb-[10px]"
    }`}
  >
    {label}
  </button>
);

const Workspace = () => (
  <main className="flex min-w-0 flex-1 flex-col border-t-2 border-l-4 border-[#808080] pl-[5px]">
    <div role="tablist" className="flex h-[50px] shrink-0 items-end font-['DejaVu_Sans',sans-serif] text-[25px]">
      <button
        role="tab"
        aria-selected={false}
        className="h-[46px] border-t-4 border-l-2 border-white px-4 pb-[10px]"
      >
        2-D Geometry
      </button>
      <ViewTab label="3-D Geometry" active />
      <ViewTab label="Spreadsheet" />
      <ViewTab label="Summary" />
    </div>
    <div className="mt-1 flex-1 border-t-2 border-l-2 border-[#696969] bg-black">
      <svg width="100%" height="100%" aria-label="3-D Geometry view">
        <path d="M1 700l100 7M801 1017L539 1219" stroke="#d0d0d0" strokeWidth="1.500" />
        <text x="572" y="1200" textAnchor="middle" fontSize="28" fontFamily="Liberation Sans" fill="#f00000">
          S
        </text>
      </svg>
    </div>
  </main>
);

const PropertiesDialog = () => {
  const [tab, setTab] = useState(0);
  const tabs = ["Project Data", "Contact Information", "3-D View Details"];

  return (
    <section
      role="dialog"
      aria-label="Project Properties"
      className="absolute top-[308px] -right-[140px] left-[587px] flex flex-col rounded-lg border-2 border-t-white border-r-[#8090a0] border-b-[#30c0d8] border-l-[#9fb4c4] bg-[linear-gradient(to_bottom,#8a9cae_0px,#6c7f90_200px,#b4c0cc_290px,#12304c_292px,#12304c_100%)] px-[10px] pb-[10px] shadow-[0_0_20px_8px_rgba(0,0,0,0.55)]"
    >
      <div className="-mx-[10px] flex h-[55px] items-start justify-between rounded-t-md bg-[linear-gradient(to_bottom,rgba(190,212,230,0.9)_0px,rgba(150,180,205,0.35)_14px,transparent_26px),linear-gradient(to_right,#a0b0be_0px,#94a5b5_180px,#5c7085_220px,#4a6076_280px,#1f3d5a_380px,#102740_450px,#102740_770px,#33485f_830px,#33485f_950px,#1a344c_1080px,#1a344c_1180px,#4c6078_1230px,#708090_1500px)] pl-3">
        <h2 className="pt-2 leading-9">Project Properties</h2>
        <div className="flex">
          <button
            aria-label="Context help"
            className="flex h-[37px] w-[53px] items-center justify-center rounded-bl-md border-2 border-t-0 border-[#26384a] bg-[linear-gradient(to_bottom,#c4ccd4_0%,#98a4b0_48%,#5c6c7a_52%,#8494a4_100%)] text-[28px] font-bold text-white [text-shadow:0_0_3px_#000]"
          >
            ?
          </button>
          <button
            aria-label="Close window"
            className="h-[37px] w-[146px] rounded-br-md border-2 border-t-0 border-[#5a1810] bg-[linear-gradient(to_bottom,#d08070_0%,#b04030_100%)]"
          />
        </div>
      </div>

      <div className="flex flex-col border-2 border-[#10161e] bg-[#f0eff0] px-[17px] pt-4 font-['DejaVu_Sans',sans-serif] text-[25px]">
        <div role="tablist" className="flex items-end">
          {tabs.map((t, i) => (
            <button
              key={t}
              role="tab"
              aria-selected={tab === i}
              onClick={() => setTab(i)}
              className={`border-t-2 border-r-4 border-l-2 border-t-white border-r-[#707070] border-l-white bg-[#f0eff0] ${
                tab === i ? "relative z-10 -mb-[2px] h-[45px] px-[30px] pb-[6px]" : "h-[39px] px-6"
              }`}
            >
              {t}
            </button>
          ))}
        </div>

        <form className="flex flex-col border-2 border-b-4 border-t-white border-r-[#808080] border-b-[#808080] border-l-white pt-[72px] pr-[109px] pb-[102px] pl-[38px]">
          <div className="flex">
            <div className="flex w-[906px] shrink-0 flex-col gap-[10px]">
              <TextField id="name" label="Project Name:" labelWidth="w-[203px]" value="Garre 115 - 4-2007" />
              <TextField id="address" label="Site Address:" labelWidth="w-[203px]" value="6898 Tesla Rd" />
              <TextField id="city" label="City, State Zip:" labelWidth="w-[203px]" value="Livermore California" />
            </div>
            <fieldset className="mt-1 ml-[130px] min-w-0 flex-1">
              <GroupHeading>Units of Measurement</GroupHeading>
              <div className="flex w-[358px] flex-col gap-[10px] pt-[6px] pl-8">
                <SelectField id="input" label="Input:" labelWidth="w-[117px]" options={["English", "Metric"]} value="English" />
                <SelectField id="output" label="Output:" labelWidth="w-[117px]" options={["English", "Metric"]} value="English" />
              </div>
            </fieldset>
          </div>

          <div className="flex pt-[69px]">
            <div className="w-[587px] shrink-0">
              <fieldset>
                <GroupHeading>File References</GroupHeading>
                <div className="flex flex-col gap-[10px] pt-[6px] pl-8">
                  <TextField id="weather" label="Weather File:" labelWidth="w-[171px]" value="CZ2\CZ03.bin" />
                  <TextField id="library" label="Library File:" labelWidth="w-[171px]" value="eQ_Lib.dat" />
                </div>
              </fieldset>
              <div className="-mr-[42px] flex flex-col gap-[10px] pt-[170px] pl-8">
                <TextField id="created" label="Project Creation:" labelWidth="w-[235px]" value="19:04, Wed, Apr 01, 2009" readOnly />
                <TextField id="modified" label="Last Modified:" labelWidth="w-[235px]" value="11:04, Sat, Apr 25, 2009" readOnly />
              </div>
            </div>

            <fieldset className="ml-[117px] min-w-0 flex-1">
              <GroupHeading>Energy Code Compliance</GroupHeading>
              <div className="flex w-[690px] flex-col gap-[10px] pt-[6px] pl-8">
                <SelectField id="code" label="Code & Version:" labelWidth="w-[236px]" options={CODES} value={CODES[5]} white>
                  <ul
                    role="listbox"
                    className="absolute top-full left-0 z-20 mt-[2px] w-full overflow-hidden border border-[#404040] bg-white pl-[1px] leading-7 whitespace-nowrap"
                  >
                    {CODES.map((c, i) => (
                      <li
                        key={c}
                        role="option"
                        aria-selected={i === 5}
                        className={`pl-1 ${i === 5 ? "bg-[#3399ff] text-white" : ""}`}
                      >
                        {c}
                      </li>
                    ))}
                  </ul>
                </SelectField>
                <span className="flex h-[43px] items-center pt-1">Analysis Type:</span>
                <span className="flex h-[43px] items-center pt-1">Simulation Output:</span>
                <label className="flex h-[43px] items-center gap-3 pt-[6px] pl-[139px] text-[#909090]">
                  <input type="checkbox" disabled className={`size-[27px] appearance-none bg-white ${sunken}`} />
                  Write
                </label>
                <label className="flex h-[43px] items-center gap-3 pt-[6px] pl-[139px] whitespace-nowrap">
                  <span className="relative flex">
                    <input type="checkbox" defaultChecked className={`size-[27px] appearance-none bg-white ${sunken}`} />
                    <svg width="27" height="27" viewBox="0 0 27 27" aria-hidden className="pointer-events-none absolute inset-0">
                      <path d="M6 11v6l5 5 10-10V6L11 16z" fill="#000" />
                    </svg>
                  </span>
                  Store Intermediate Simulation Models
                </label>
              </div>
            </fieldset>
          </div>
        </form>

        <div className="flex justify-end pt-[18px] pr-[44px] pb-4">
          <button className={`h-[50px] w-[158px] font-['Liberation_Sans',sans-serif] text-[24px] outline-2 -outline-offset-1 outline-[#606060] ${raised}`}>
            Close
          </button>
        </div>
      </div>
    </section>
  );
};

export default function App() {
  return (
    <div className="relative flex h-screen flex-col overflow-hidden bg-[#f0eff0] font-['Open_Sans',sans-serif] text-[24px] leading-none text-black">
      <TitleBar />
      <MenuBar />
      <ToolBar />
      <ModuleBar />
      <div className="flex min-h-0 flex-1">
        <Sidebar />
        <Workspace />
      </div>
      <PropertiesDialog />
    </div>
  );
}
